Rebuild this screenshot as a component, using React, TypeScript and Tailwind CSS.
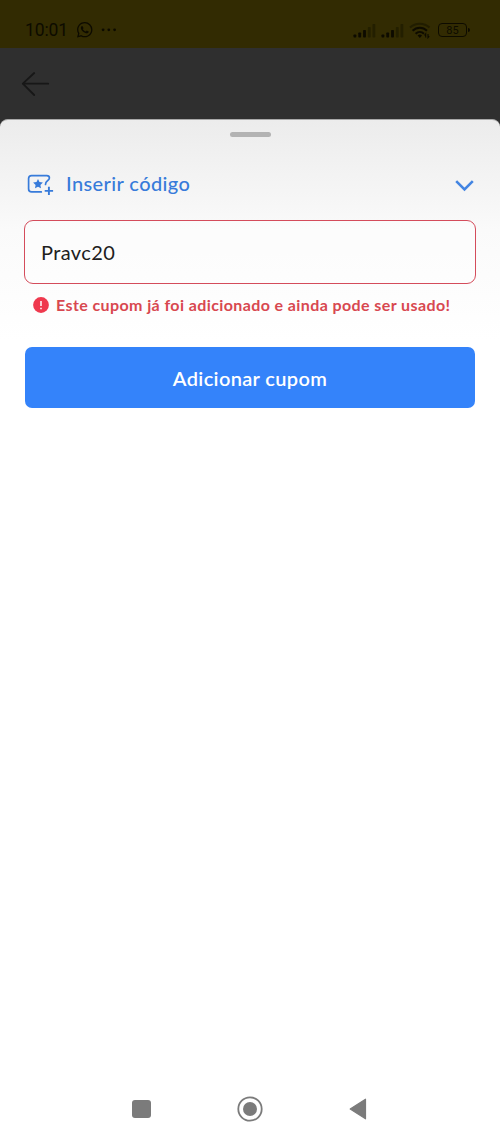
import { BsWhatsapp } from "react-icons/bs";

function Signal() {
  return (
    <svg width="23" height="14" viewBox="0 0 23 14" className="block">
      <g fill="#0d0b00">
        <rect x="0.5" y="10.5" width="2.8" height="3" rx="0.7" />
        <rect x="5.3" y="8.5" width="2.8" height="5" rx="0.7" />
        <rect x="10.1" y="6" width="2.8" height="7.5" rx="0.7" />
      </g>
      <g fill="#231f00">
        <rect x="14.9" y="3" width="2.8" height="10.5" rx="0.7" />
        <rect x="19.5" y="0" width="2.8" height="13.5" rx="0.7" />
      </g>
    </svg>
  );
}

function Wifi() {
  return (
    <svg width="22" height="17" viewBox="0 0 22 17" fill="none" className="block">
      <path d="M1 5.6C6.5.4 15 .4 20.5 5.6" stroke="#211d00" strokeWidth="2" />
      <path d="M3.6 8.7c4.1-4.1 10.3-4.1 14.4 0" stroke="#0d0b00" strokeWidth="2" />
      <path d="M6.6 11.7c2.5-2.4 6-2.4 8.4 0" stroke="#0d0b00" strokeWidth="2" />
      <path d="M8.6 13.4c1.2-1.3 3.2-1.3 4.4 0L10.8 16z" fill="#0d0b00" />
      <path d="M16.7 15.5v-3.6l-1.2 1.5M19 12v3.6l1.2-1.5" stroke="#0d0b00" strokeWidth="1.1" />
    </svg>
  );
}

function StatusBar() {
  return (
    <header className="flex h-12 shrink-0 items-start bg-[#322b02] text-[#0d0b00]">
      <div className="ml-[25px] mt-[20px] w-[51px] font-[Roboto,sans-serif] text-[17.5px] leading-[20px] tracking-[-0.1px]">
        10:01
      </div>
      <BsWhatsapp className="ml-[1px] mt-[22px] size-[15.5px]" />
      <svg width="16" height="4" viewBox="0 0 16 4" className="ml-[8.5px] mt-[28px]" fill="#0d0b00">
        <circle cx="2.1" cy="1.8" r="1.4" />
        <circle cx="7.8" cy="1.8" r="1.4" />
        <circle cx="13.6" cy="1.8" r="1.4" />
      </svg>
      <div className="ml-auto mr-[30px] mt-[22px] flex items-start">
        <div className="mt-[1.5px] flex gap-[5px]">
          <Signal />
          <Signal />
        </div>
        <div className="ml-[5px] w-[29px]">
          <Wifi />
        </div>
        <div className="mt-px flex items-center">
          <div className="flex h-[14px] w-[29px] items-center justify-center rounded-[4px] border-[1.5px] border-[#0d0b00] font-[Roboto,sans-serif] text-[11px] leading-none">
            85
          </div>
          <div className="ml-px h-[4px] w-[2px] rounded-r-sm bg-[#0d0b00]" />
        </div>
      </div>
    </header>
  );
}

function CouponIcon() {
  return (
    <svg width="27" height="22" viewBox="0 0 27 22" fill="none" className="block">
      <path
        d="M14.3 17.9H4.6Q1.6 17.9 1.6 14.9V4.6Q1.6 1.6 4.6 1.6h15.2Q22.4 1.6 22.4 4c0 1.3-.8 1.9-1.9 2.7-1.5 1-2 2-2 3.7"
        stroke="#377bda"
        strokeWidth="1.7"
        strokeLinecap="round"
      />
      <path
        d="m11 5 1.5 3.1 3.4.5-2.5 2.3.6 3.4L11 12.7l-3 1.6.6-3.4-2.5-2.3 3.4-.5z"
        fill="#377bda"
      />
      <path d="M21.9 12.7v8.4M17.7 16.9h8.4" stroke="#377bda" strokeWidth="1.9" />
    </svg>
  );
}

export default function App() {
  return (
    <div className="flex h-[1139px] w-[500px] flex-col overflow-hidden bg-[#2f2f2f] font-[Lato,sans-serif]">
      <StatusBar />
      <div className="h-[71px] shrink-0 pl-[21px] pt-[23px]">
        <svg width="29" height="26" viewBox="0 0 29 26" fill="none" stroke="#171717" strokeWidth="1.8" strokeLinecap="round" strokeLinejoin="round">
          <path d="M13.2 2 1.8 12.7 13.2 24M1.8 12.7h25.4" />
        </svg>
      </div>
      <main className="flex min-h-0 flex-1 flex-col rounded-t-[8px] border-t border-[#a8a8a8] bg-white bg-linear-to-b from-[#ececec] via-[#fafafa] via-[110px] to-white to-[220px]">
        <div className="mx-auto mt-[12px] h-[5px] w-[41px] shrink-0 rounded-full bg-[#b3b3b3]" />
        <button className="ml-[27px] mr-[26px] mt-[33px] flex h-[26px] shrink-0 items-center text-left">
          <span className="mt-[4px] w-[39px]">
            <CouponIcon />
          </span>
          <span className="whitespace-nowrap text-[20px] font-medium leading-[26px] tracking-[0.4px] text-[#377bda]">
            Inserir código
          </span>
          <svg width="19" height="12" viewBox="0 0 19 12" fill="none" className="ml-auto mt-[6px]">
            <path d="m1.2 1.2 8.3 8.2 8.3-8.2" stroke="#4385e2" strokeWidth="2.6" />
          </svg>
        </button>
        <div className="mx-[24px] mt-[24px] flex h-[64px] shrink-0 items-center rounded-[9px] border-[1.5px] border-[#d44c5b] bg-white/40 pl-[16px] text-[20px] tracking-[0.4px] text-[#202020]">
          Pravc20
        </div>
        <div className="ml-[33px] mt-[10px] flex h-[22px] shrink-0 items-center">
          <svg width="16" height="16" viewBox="0 0 16 16">
            <circle cx="8" cy="8" r="7.9" fill="#ef394e" />
            <path d="M8 4v5M8 10.7v1.5" stroke="#fff" strokeWidth="1.5" />
          </svg>
          <p className="ml-[7px] whitespace-nowrap text-[16px] font-bold leading-[22px] tracking-[0.4px] text-[#d84850]">
            Este cupom já foi adicionado e ainda pode ser usado!
          </p>
        </div>
        <button className="mx-[25px] mt-[31px] flex h-[61px] shrink-0 items-center justify-center rounded-[7px] bg-[#3483fa] text-[20px] font-semibold tracking-[0.35px] text-white">
          Adicionar cupom
        </button>
        <nav className="mb-[17px] mt-auto flex h-[26px] shrink-0 items-center">
          <div className="ml-[132px] size-[18.5px] rounded-[3px] bg-[#7b7b7b]" />
          <svg width="26" height="26" viewBox="0 0 26 26" className="ml-[86px]">
            <circle cx="13" cy="13" r="11.7" fill="none" stroke="#7b7b7b" strokeWidth="1.8" />
            <circle cx="13" cy="13" r="7" fill="#7b7b7b" />
          </svg>
          <svg width="18" height="22" viewBox="0 0 18 22" className="ml-[86px]">
            <path d="M16.5 1.2v19.6L1.2 11z" fill="#7b7b7b" stroke="#7b7b7b" strokeWidth="1.2" strokeLinejoin="round" />
          </svg>
        </nav>
      </main>
    </div>
  );
}
